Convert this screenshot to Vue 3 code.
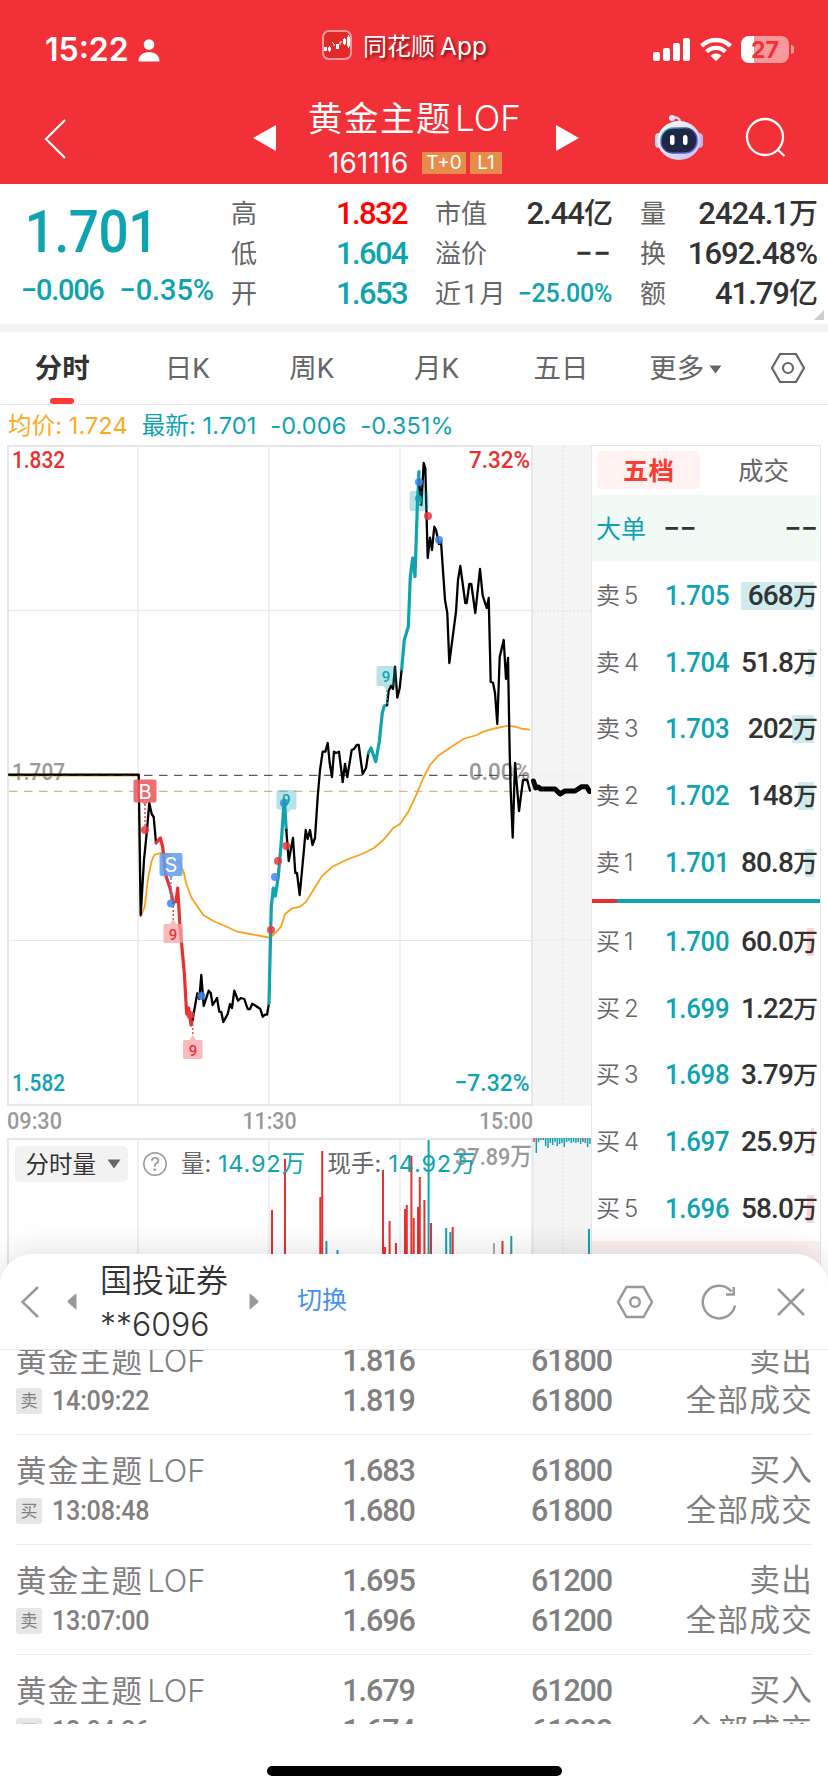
<script setup>
import { ref } from 'vue'

const tabs = ['分时', '日K', '周K', '月K', '五日']
const activeTab = ref('分时')

const quotes = [
  [
    { label: '高', value: '1.832', tone: 'up' },
    { label: '低', value: '1.604', tone: 'down' },
    { label: '开', value: '1.653', tone: 'down' }
  ],
  [
    { label: '市值', value: '2.44', unit: '亿' },
    { label: '溢价', value: '−−', tone: 'empty' },
    { label: '近1月', value: '−25.00%', tone: 'down small' }
  ],
  [
    { label: '量', value: '2424.1', unit: '万' },
    { label: '换', value: '1692.48%' },
    { label: '额', value: '41.79', unit: '亿' }
  ]
]

const sells = [
  { level: 5, price: '1.705', volume: '668', bar: 73 },
  { level: 4, price: '1.704', volume: '51.8', bar: 6 },
  { level: 3, price: '1.703', volume: '202', bar: 22 },
  { level: 2, price: '1.702', volume: '148', bar: 16 },
  { level: 1, price: '1.701', volume: '80.8', bar: 9 }
]

const buys = [
  { level: 1, price: '1.700', volume: '60.0', bar: 7 },
  { level: 2, price: '1.699', volume: '1.22', bar: 0 },
  { level: 3, price: '1.698', volume: '3.79', bar: 0 },
  { level: 4, price: '1.697', volume: '25.9', bar: 3 },
  { level: 5, price: '1.696', volume: '58.0', bar: 7 }
]

const orders = [
  { side: '卖', time: '14:09:22', price: '1.816', deal: '1.819', amount: '61800', action: '卖出' },
  { side: '买', time: '13:08:48', price: '1.683', deal: '1.680', amount: '61800', action: '买入' },
  { side: '卖', time: '13:07:00', price: '1.695', deal: '1.696', amount: '61200', action: '卖出' },
  { side: '买', time: '12:04:26', price: '1.679', deal: '1.674', amount: '61200', action: '买入' }
]

// 分时价格线, 按颜色分段
const segments = [
  { color: 'black', points: '9,774.7 138.7,774.7 140.7,915 144,860 146.7,833 149.3,803 151.7,814 153.7,817 156,843' },
  { color: 'red', points: '156,843 160.3,838 162.7,847 165.7,875 170,888 173.3,903' },
  { color: 'black', points: '173.3,903 176,901.7' },
  { color: 'red', points: '176,901.7 177.7,888 180,926.7 184.3,973 186.7,1014 188.7,1008 191,1025 192.7,1019' },
  { color: 'black', points: '192.7,1019 197.3,993.3 199.3,999 201.3,975 203.7,1006 206,999 208.7,990.7 210.7,993 212.7,1005 217,998 219.3,1011.7 221.3,1012 223.3,1022 227.7,1014 230,1004 232,1008 234.3,990.7 238,1000.7 241,998 244.3,999 247.7,1009 250,1009 252.3,1003.7 256,1006 260.3,1009 262.7,1016.7 265,1014.7 267,1014.7 269,1003.3' },
  { color: 'teal', points: '269,1003.3 270.7,930 271.3,906.7 273.3,888 275.3,896 278.3,876.7 281.7,836.7 283.7,806.7 284.3,800 286.3,830' },
  { color: 'black', points: '286.3,830 288.7,861 293,838 295.3,873 297,873 299.7,895 303,860 305.7,830 307.7,839 310,830 312.5,845 315,838 317.7,796.7 320,770 322.7,751.7 325.3,751.7 327.7,743 329.7,763 332,777 334,751.7 336,753 339,751.7 342.7,782 345,764 347.3,777 351.7,750 354,749 356.7,745 358.7,745 360.7,760 362.7,774 366,768 368.3,753' },
  { color: 'teal', points: '368.3,753 371,748 375.7,761.7 379.3,741.7 382.3,713 384.3,706 387,705' },
  { color: 'black', points: '387,705 388.7,690.7 391,685.7 393,689 395,666.7 397.3,697.7 399.7,688 401.7,669' },
  { color: 'teal', points: '401.7,669 404.3,640 408.3,626.7 410.3,576.7 412.7,558 415,576.7 417.3,506.7 419,471.7' },
  { color: 'black', points: '419,480 421.3,505 423.7,463 425.3,468 427.7,558 430,537.7 432,550 434.3,526.7 436,530 439,544 441,541.7 445,600 447.3,613 449.3,663 456,611.7 458,580 460.3,566 465.3,603 466.7,603 469.3,584 471.3,584 475.3,613 480,569 482.7,595.7 486.7,608 488.7,598 490.7,681.7 493,682.7 495,693 497.3,724 499.7,657 503.7,640 506,679 508,658 509.7,753 510.7,790 512.7,837.7 515,763 519,811 523,780 527.3,780 530,790.7' }
]

const average = '9,775.5 138.7,775.5 140.7,917 144.7,906.7 148.3,876.7 151.7,860.7 154.3,855 161.7,852.7 166.7,854 180,863 184,873 186,883 191.7,898 203.3,915 213.3,921 226.7,926.7 237.3,931.7 250,934 270,937.7 276.7,931.7 281,926.7 285,914 291.7,908.7 300,906.7 306,902 314,889 322,876 332,867 346,860 362,854 374,848 383.3,840 393.3,828 400,824 405,816.7 408.3,811.7 416.7,794 423.3,778 430,765 438.3,755.7 446.7,750 463.3,739 476.7,735 483.3,731.7 496.7,728 508.3,725.7 515,726.7 523.3,729 530,729.7'

const dots = [
  { x: 145, y: 830, c: 'red' }, { x: 171, y: 903.5, c: 'blue' },
  { x: 190.5, y: 1015, c: 'red' }, { x: 201.5, y: 996, c: 'blue' },
  { x: 271, y: 930, c: 'red' }, { x: 275, y: 877, c: 'blue' },
  { x: 278, y: 861, c: 'red' }, { x: 286.3, y: 846, c: 'red' },
  { x: 284, y: 803, c: 'blue' }, { x: 419, y: 482, c: 'blue' },
  { x: 428, y: 516, c: 'red' }, { x: 439, y: 540, c: 'blue' }
]

const volumes = [
  [272, 1210, 'red'], [285, 1159, 'red'], [320.3, 1197, 'red'], [322.2, 1151, 'red'],
  [326.4, 1241, 'teal'], [337.5, 1250, 'teal'], [383, 1170, 'red'], [385, 1247, 'red'],
  [389.6, 1221, 'red'], [396, 1243, 'red'], [405, 1209, 'red'], [406.8, 1205, 'red'],
  [411.4, 1156, 'red'], [413.7, 1218, 'red'], [418, 1207, 'red'], [419.8, 1177, 'red'],
  [424.4, 1200, 'red'], [428.6, 1140, 'teal'], [431, 1223, 'red'], [446.2, 1228, 'teal'],
  [450.4, 1232, 'teal'], [452.7, 1227, 'red'], [494, 1243, 'gray'], [502.5, 1241, 'red'],
  [511.3, 1236, 'teal'], [589, 1229, 'teal']
]

// 盘后成交, 从顶部向下画
const afterHours = [4, 15, 4, 2, 2, 8, 10, 5, 7, 4, 8, 6, 5, 9, 4, 3, 5, 4, 5, 4, 6, 4, 5, 9, 6]
</script>

<template>
  <div class="page">
    <header class="top">
      <div class="status">
        <div class="clock">
          <span>15:22</span>
          <svg width="22" height="24" viewBox="0 0 22 24"><circle cx="11" cy="6.5" r="5.3" /><path d="M.5 23c0-5.500 4.500-9 10.500-9s10.500 3.500 10.500 9q0 .5-1 .5h-19q-1 0-1-.5z" /></svg>
        </div>
        <div class="app-name">
          <svg width="30" height="30" viewBox="0 0 30 30">
            <rect x="1" y="1" width="28" height="28" rx="6" fill="#e22a2a" stroke="#f7999c" stroke-width="2" />
            <path d="M2 17h3v4H2zM14 14h3v5h-3zM21 9h3v5h-3z" fill="#fff" />
            <path d="M7.500 16v6M6.500 17.500h2v3h-2zM10 12l2 2v2M18 15v-3h2M22.500 8v7M26.500 5v13M25.500 7h2v9h-2z" stroke="#fff" fill="none" />
          </svg>
          <span>同花顺<b>App</b></span>
        </div>
        <div class="signals">
          <svg width="38" height="24" viewBox="0 0 38 24"><rect y="15" width="7" height="9" rx="2" /><rect x="10" y="11" width="7" height="13" rx="2" /><rect x="20" y="6" width="7" height="18" rx="2" /><rect x="30" y="1" width="7" height="23" rx="2" /></svg>
          <svg width="32" height="24" viewBox="0 0 32 24"><g fill="none" stroke="#fff" stroke-width="4.300"><path d="M1.500 9a20.500 20.500 0 0 1 29 0" /><path d="M6.700 14.700a13.200 13.200 0 0 1 18.600 0" /></g><path d="M10.500 18.700a8 8 0 0 1 11 0L16 24.200z" /></svg>
          <div class="battery"><span>27</span></div>
          <i class="nub"></i>
        </div>
      </div>
      <div class="title-bar">
        <svg class="back" width="24" height="42" viewBox="0 0 24 42"><path d="M22 2 3 21l19 19" fill="none" stroke="#fff" stroke-width="2.200" /></svg>
        <svg class="prev" width="23" height="26" viewBox="0 0 23 26"><path d="M23 0v26L0 13z" /></svg>
        <div class="title">
          <h1>黄金主题<span>LOF</span></h1>
          <div class="code"><span>161116</span><em>T+0</em><em class="l1">L1</em></div>
        </div>
        <svg class="next" width="23" height="26" viewBox="0 0 23 26"><path d="M0 0v26l23-13z" /></svg>
        <svg class="robot" width="50" height="46" viewBox="0 0 50 46">
          <defs>
            <linearGradient id="shell" x1="0" y1="0" x2="1" y2="1"><stop offset="0" stop-color="#fff" /><stop offset="1" stop-color="#bfc0ea" /></linearGradient>
            <linearGradient id="visor" x1="0" y1="0" x2="1" y2="1"><stop offset="0" stop-color="#58d7e8" /><stop offset=".4" stop-color="#39407e" /><stop offset="1" stop-color="#8a5cf0" /></linearGradient>
          </defs>
          <path d="M18 4q8-2 8 5" fill="none" stroke="#d9dcf5" stroke-width="2.500" />
          <circle cx="18" cy="4" r="3" fill="#e8eafc" />
          <rect x="1" y="19" width="8" height="15" rx="4" fill="#c9cdf2" /><rect x="41" y="19" width="8" height="15" rx="4" fill="#b7b9ea" />
          <ellipse cx="25" cy="26.500" rx="21.500" ry="19.500" fill="url(#shell)" />
          <rect x="7" y="14" width="36" height="25" rx="12" fill="#1d2748" stroke="url(#visor)" stroke-width="1.500" />
          <rect x="16" y="21" width="4.500" height="10" rx="2.200" fill="#fff" /><rect x="29" y="21" width="4.500" height="10" rx="2.200" fill="#fff" />
        </svg>
        <svg class="search" width="42" height="42" viewBox="0 0 42 42"><circle cx="20" cy="20" r="18" /><path d="m32.500 32.500 7 6.500" /></svg>
      </div>
    </header>

    <section class="quote">
      <div class="last">
        <div class="last-price">1.701</div>
        <div class="last-change"><span>−0.006</span><span>−0.35%</span></div>
      </div>
      <dl v-for="(group, i) in quotes" :key="i" :class="'group g' + i">
        <div v-for="q in group" :key="q.label">
          <dt>{{ q.label }}</dt>
          <dd :class="q.tone">{{ q.value }}<i v-if="q.unit">{{ q.unit }}</i></dd>
        </div>
      </dl>
      <i class="corner"></i>
    </section>

    <nav class="tabs">
      <button v-for="tab in tabs" :key="tab" :class="{ active: tab === activeTab }" @click="activeTab = tab">{{ tab }}</button>
      <button>更多<svg width="13" height="9" viewBox="0 0 13 9"><path d="M.5.500h12l-6 8z" fill="#666" /></svg></button>
      <svg class="hex" width="36" height="32" viewBox="0 0 36 32"><path d="M10 2h16l8 14-8 14H10L2 16z" /><circle cx="18" cy="16" r="5" /></svg>
    </nav>

    <div class="legend">
      <span class="avg">均价: 1.724</span><span>最新: 1.701</span><span>-0.006</span><span>-0.351%</span>
    </div>

    <main class="market">
      <svg class="chart" width="591" height="845" viewBox="0 445 591 845">
        <rect x="533" y="445" width="58" height="661" fill="#f4f4f4" />
        <rect x="533" y="1138" width="58" height="152" fill="#f4f4f4" />
        <g stroke="#f0f0f2" stroke-width="2">
          <path d="M138 446V1105M269 446V1105M400 446V1105M138 1139V1290M269 1139V1290M400 1139V1290" />
          <path d="M8 610.500H532M8 940.500H532" stroke="#e8e8ea" stroke-width="1" />
          <path d="M563 446V1105M563 1139V1290M533 611H591" stroke="#e6e6e6" stroke-dasharray="2 2" stroke-width="1.500" />
          <path d="M533 776H591M533 940H591" stroke="#ececec" stroke-width="1" />
        </g>
        <path d="M533 446H8V1105H532V446M8 1290V1139H591M532.500 1139V1290" fill="none" stroke="#e6e6e8" stroke-width="2" />

        <text class="num gray" x="12" y="780" textLength="53" lengthAdjust="spacingAndGlyphs">1.707</text>
        <text class="num gray" x="469" y="780" textLength="61" lengthAdjust="spacingAndGlyphs">0.00%</text>

        <polyline :points="average" fill="none" stroke="#fca11f" stroke-width="1.800" />
        <path d="M9 775.300H530" stroke="#333" stroke-dasharray="8.500 6.500" />
        <path d="M9 791.300H530" stroke="#c9a36c" stroke-dasharray="8.500 6.500" />
        <polyline v-for="(s, i) in segments" :key="i" :points="s.points" :class="['line', s.color]" />
        <polyline class="line after" points="533.500,781 535.700,788 538.300,787 540.700,789 555,789 560,794 565,791 575,791 581.700,786.700 586.700,786.700 589.500,791.500" />

        <g stroke-width="1.500" stroke-dasharray="2 2">
          <path d="M145 804V828M173.300 906V920M192.700 1024V1036" stroke="#e9494d" />
          <path d="M171 878V902" stroke="#4f8fe8" />
          <path d="M387 690V704" stroke="#0fa3b0" />
        </g>
        <circle v-for="(d, i) in dots" :key="'d' + i" :cx="d.x" :cy="d.y" r="4" :fill="d.c === 'red' ? '#e8383c' : '#3f87e8'" opacity=".85" />
        <g class="flag buy"><path d="M135.500 779.500h19a2 2 0 0 1 2 2v19a2 2 0 0 1-2 2h-7l-2.500 3-2.500-3h-7a2 2 0 0 1-2-2v-19a2 2 0 0 1 2-2z" /><text x="145" y="798.500">B</text></g>
        <g class="flag sell"><path d="M161.500 853h19a2 2 0 0 1 2 2v19a2 2 0 0 1-2 2h-7l-2.500 3-2.500-3h-7a2 2 0 0 1-2-2v-19a2 2 0 0 1 2-2z" /><text x="171" y="872">S</text></g>
        <g class="nine red"><path d="M165 924h5l3.300-5 3.300 5h5a1.500 1.500 0 0 1 1.500 1.500v16a1.500 1.500 0 0 1-1.500 1.500H165a1.500 1.500 0 0 1-1.500-1.500v-16A1.500 1.500 0 0 1 165 924z" /><text x="173" y="940">9</text></g>
        <g class="nine red"><path d="M184.500 1040h5l3.300-5 3.300 5h5a1.500 1.500 0 0 1 1.500 1.500v16a1.500 1.500 0 0 1-1.500 1.500h-16.600a1.500 1.500 0 0 1-1.500-1.500v-16a1.500 1.500 0 0 1 1.500-1.500z" /><text x="193" y="1056">9</text></g>
        <g class="nine teal"><path d="M278 790h17a1.500 1.500 0 0 1 1.500 1.500v16.500a1.500 1.500 0 0 1-1.500 1.500h-4.500l-3.500 5-3.500-5h-5.500a1.500 1.500 0 0 1-1.500-1.500v-16.500a1.500 1.500 0 0 1 1.500-1.500z" /><text x="286.300" y="805">9</text></g>
        <g class="nine teal"><path d="M378 666h17a1.500 1.500 0 0 1 1.500 1.500v17a1.500 1.500 0 0 1-1.500 1.500h-4.500l-3.500 5-3.500-5H378a1.500 1.500 0 0 1-1.500-1.500v-17a1.500 1.500 0 0 1 1.500-1.500z" /><text x="386" y="682">9</text></g>
        <g class="nine teal"><path d="M411 491h16a1.500 1.500 0 0 1 1.500 1.500v17a1.500 1.500 0 0 1-1.500 1.500h-16a1.500 1.500 0 0 1-1.500-1.500v-17a1.500 1.500 0 0 1 1.500-1.500z" /><text x="418.500" y="506">9</text></g>

        <text class="num up" x="12" y="468" textLength="53" lengthAdjust="spacingAndGlyphs">1.832</text>
        <text class="num up" x="469" y="468" textLength="61" lengthAdjust="spacingAndGlyphs">7.32%</text>
        <text class="num down" x="12" y="1091" textLength="53" lengthAdjust="spacingAndGlyphs">1.582</text>
        <text class="num down" x="454.500" y="1091" textLength="75" lengthAdjust="spacingAndGlyphs">−7.32%</text>
        <text class="num gray" x="7" y="1129" textLength="55" lengthAdjust="spacingAndGlyphs">09:30</text>
        <text class="num gray" x="242.500" y="1129" textLength="54" lengthAdjust="spacingAndGlyphs">11:30</text>
        <text class="num gray" x="479" y="1129" textLength="54" lengthAdjust="spacingAndGlyphs">15:00</text>

        <rect x="15" y="1146" width="113" height="36" rx="5" fill="#f2f2f2" />
        <text class="cjk dark" x="25.500" y="1173">分时量</text>
        <path d="M107.500 1159.500h13l-6.500 9z" fill="#666" />
        <circle cx="155" cy="1164" r="11.200" fill="none" stroke="#999" stroke-width="1.500" />
        <text class="cjk help" x="155" y="1171">?</text>
        <g v-for="(v, i) in volumes" :key="'v' + i" :class="['vol', v[2]]"><path :d="`M${v[0]} ${v[1]}V1290`" /></g>
        <text class="cjk" x="181" y="1172">量:</text>
        <text class="cjk legend-num" x="218" y="1172" textLength="87">14.92万</text>
        <text class="cjk" x="327.500" y="1172">现手:</text>
        <text class="num gray" x="455" y="1165" textLength="77" lengthAdjust="spacingAndGlyphs">37.89万</text>
        <text class="cjk legend-num" x="388.500" y="1172" textLength="87">14.92万</text>
        <path v-for="(h, i) in afterHours" :key="'a' + i" :d="`M${534 + i * 2.33} 1138v${h}`" :stroke="[0, 4, 21].includes(i) ? '#e8383c' : '#0fa3b0'" stroke-width="1.500" />
      </svg>

      <aside class="book">
        <div class="book-tabs"><span class="on">五档</span><span>成交</span></div>
        <div class="big"><span>大单</span><b>−−</b><b>−−</b></div>
        <div v-for="s in sells" :key="'s' + s.level" class="level sell">
          <span>卖{{ s.level }}</span><b>{{ s.price }}</b>
          <em><i :style="{ width: s.bar + 'px' }"></i><u>{{ s.volume }}<small>万</small></u></em>
        </div>
        <div class="ratio"><i></i></div>
        <div v-for="b in buys" :key="'b' + b.level" class="level buy">
          <span>买{{ b.level }}</span><b>{{ b.price }}</b>
          <em><i :style="{ width: b.bar + 'px' }"></i><u>{{ b.volume }}<small>万</small></u></em>
        </div>
        <div class="pink"></div>
      </aside>
    </main>

    <section class="sheet">
      <div class="sheet-head">
        <svg class="s-back" width="20" height="34" viewBox="0 0 20 34"><path d="M18 2 2.500 17 18 32" /></svg>
        <svg class="s-prev" width="10" height="17" viewBox="0 0 10 17"><path d="M9.500.500v16Q8 16 1 9.500q-1-1 0-2Q8 1 9.500.500z" /></svg>
        <div class="account"><div>国投证券</div><div class="acct-no">**6096</div></div>
        <svg class="s-next" width="10" height="17" viewBox="0 0 10 17"><path d="M.5.500v16Q2 16 9 9.500q1-1 0-2Q2 1 .5.500z" /></svg>
        <a>切换</a>
        <svg class="s-hex" width="38" height="34" viewBox="0 0 38 34"><path d="M10.500 2h17L36 17l-8.500 15h-17L2 17z" /><circle cx="19" cy="17" r="4.800" /></svg>
        <svg class="s-refresh" width="36" height="36" viewBox="0 0 36 36"><path d="M34 21.500A16.300 16.300 0 1 1 30.500 7.500" /><path d="M32.700 3v7.500H25" /></svg>
        <svg class="s-close" width="28" height="28" viewBox="0 0 28 28"><path d="m1 1 26 26M27 1 1 27" /></svg>
      </div>
      <div class="orders">
        <div class="order-list">
          <div v-for="o in orders" :key="o.time" class="order">
            <div class="o-name"><p>黄金主题<span>LOF</span></p><div><i>{{ o.side }}</i><time>{{ o.time }}</time></div></div>
            <div class="o-num"><p>{{ o.price }}</p><p>{{ o.deal }}</p></div>
            <div class="o-num"><p>{{ o.amount }}</p><p>{{ o.amount }}</p></div>
            <div class="o-state"><p>{{ o.action }}</p><p>全部成交</p></div>
          </div>
        </div>
      </div>
      <div class="home"></div>
    </section>
  </div>
</template>

<style>
body {
  margin: 0;
  background: #fff;
}
</style>

<style scoped>
* {
  box-sizing: border-box;
}

.page {
  width: 828px;
  height: 1792px;
  overflow: hidden;
  background: #fff;
  color: #333;
  font-family: Roboto, "Noto Sans CJK SC", sans-serif;
}

i, em {
  font-style: normal;
}

p, dl, dd, h1 {
  margin: 0;
}

/* 顶部 */
.top {
  height: 184px;
  background: #f23038;
  color: #fff;
}

.top svg {
  fill: #fff;
}

.status {
  display: flex;
  height: 98px;
}

.clock {
  width: 322px;
  padding: 31px 0 0 45px;
  display: flex;
  gap: 11px;
  font: 600 32px/38px Inter, sans-serif;
}

.clock svg {
  margin: 7px 0 0 -2px;
}

.app-name {
  width: 331px;
  padding-top: 30px;
  display: flex;
  gap: 11px;
  font-size: 24px;
  line-height: 32px;
  text-shadow: 2px 2px 3px rgba(80, 0, 0, .7);
}

.app-name b {
  margin-left: 5px;
  font: 400 24.500px/32px Inter, sans-serif;
}

.signals {
  display: flex;
  padding-top: 37px;
}

.signals svg + svg {
  margin-left: 9px;
}

.battery {
  width: 48px;
  height: 27px;
  margin: -1px 2px 0 9px;
  border-radius: 8px;
  background: linear-gradient(90deg, #fff 13px, #f8989c 13px);
  color: #f23038;
  font: 700 23px/28px Inter, sans-serif;
  text-align: center;
}

.nub {
  width: 3px;
  height: 9px;
  margin-top: 8px;
  border-radius: 0 4px 4px 0;
  background: #f8989c;
}

.title-bar {
  display: flex;
  height: 86px;
}

.back {
  margin: 20px 0 0 43px;
}

.prev {
  margin: 27px 0 0 186px;
}

.title {
  flex: none;
  width: 234px;
  margin: 0 33px 0 13px;
  padding-left: 19px;
}

h1 {
  height: 46px;
  font-size: 34.500px;
  font-weight: 400;
  line-height: 43px;
  letter-spacing: 1.500px;
  white-space: nowrap;
}

h1 span {
  margin-left: 3px;
  font: 300 35px/41px Inter, sans-serif;
  letter-spacing: 0;
}

.code {
  display: flex;
  align-items: center;
  height: 38px;
  padding-left: 20px;
  font: 400 28px/30px Inter, sans-serif;
}

.code span {
  width: 94px;
}

.code em {
  width: 44px;
  height: 22px;
  margin-right: 4px;
  background: #e58d4a;
  font-size: 19px;
  line-height: 22px;
  text-align: center;
}

.code .l1 {
  width: 32px;
}

.next {
  margin-top: 27px;
}

.robot {
  margin: 16px 0 0 75px;
}

.top .search {
  margin: 19px 0 0 41px;
  fill: none;
  stroke: #fff;
  stroke-width: 2.300;
}

/* 行情 */
.quote {
  position: relative;
  display: flex;
  height: 148px;
  border-bottom: 8px solid #f4f4f4;
}

.last {
  width: 231px;
  color: #0fa3b0;
  font-weight: 500;
}

.last-price {
  height: 84px;
  padding: 17px 0 0 25px;
  font-size: 60px;
  line-height: 62px;
  letter-spacing: -0.500px;
  transform: scaleX(.885);
  transform-origin: 22px 0;
}

.last-change {
  display: flex;
  gap: 16px;
  padding-left: 21px;
  font-size: 29px;
  line-height: 44px;
  letter-spacing: -1.300px;
  white-space: nowrap;
}

.last-change span + span {
  letter-spacing: -0.100px;
}

.group {
  padding-top: 10px;
}

.group > div {
  display: flex;
  justify-content: space-between;
  height: 40px;
  line-height: 40px;
  white-space: nowrap;
}

.g0 {
  width: 176px;
}

.g1 {
  width: 177px;
  margin-left: 28px;
}

.g2 {
  width: 177px;
  margin-left: 28px;
}

dt {
  font-size: 26px;
  color: #666;
}

.g1 > div:last-child dt {
  letter-spacing: 2px;
}

dd {
  font-size: 31px;
  font-weight: 500;
  letter-spacing: -1px;
}

.g0 dd {
  letter-spacing: -1.600px;
}

dd i {
  font-size: 29px;
}

.up {
  color: #f00;
}

.down {
  color: #0fa3b0;
}

.g1 .small {
  font-size: 25px;
  letter-spacing: -0.300px;
}

.g1 .empty {
  letter-spacing: 1px;
}

.corner {
  position: absolute;
  right: 4px;
  bottom: 4px;
  border-left: 10px solid transparent;
  border-bottom: 10px solid #ccc;
}

/* 周期切换 */
.tabs {
  display: flex;
  height: 73px;
  border-bottom: 1px solid #eaeaea;
}

.tabs button {
  position: relative;
  width: 124.700px;
  padding: 1px 0 0;
  border: 0;
  background: none;
  color: #666;
  font: 400 27.500px/71px Roboto, "Noto Sans CJK SC", sans-serif;
}

.tabs button svg {
  margin: 0 0 4px 5px;
}

.tabs .active {
  color: #333;
  font-weight: 700;
}

.tabs .active::after {
  content: "";
  position: absolute;
  left: 50px;
  bottom: 0;
  width: 24px;
  height: 6px;
  border-radius: 3px;
  background: #fd3b30;
}

.hex {
  margin: 20px 0 0 22px;
  fill: none;
  stroke: #666;
  stroke-width: 2.200;
}

.legend {
  display: flex;
  height: 40px;
  padding: 1px 0 0 8px;
  gap: 14px;
  color: #0fa3b0;
  font: 400 23.500px/40px Inter, "Noto Sans CJK SC", sans-serif;
  letter-spacing: 0.100px;
}

.avg {
  color: #fcaa1f;
}

/* 走势图 */
.market {
  display: flex;
  height: 845px;
}

.chart {
  flex: none;
}

.num {
  font-size: 24.500px;
  font-weight: 500;
}

.num.up {
  fill: #e93030;
}

.num.down {
  fill: #0fa3b0;
}

.num.gray {
  fill: #999;
}

.line {
  fill: none;
  stroke-width: 2.300;
  stroke-linejoin: round;
  stroke-linecap: round;
}

.line.black {
  stroke: #000;
}

.line.red {
  stroke: #e93030;
  stroke-width: 3.200;
}

.line.teal {
  stroke: #0fa3b0;
  stroke-width: 3.200;
}

.line.after {
  stroke: #000;
  stroke-width: 5;
}

.flag text {
  fill: #fff;
  font: 400 20px Inter, sans-serif;
  text-anchor: middle;
}

.flag.buy path {
  fill: #ee5a5e;
  opacity: .88;
}

.flag.sell path {
  fill: #5f9cec;
  opacity: .85;
}

.nine text {
  font-size: 15px;
  font-weight: 500;
  text-anchor: middle;
}

.nine.red path {
  fill: #f6a5a8;
  opacity: .75;
}

.nine.red text {
  fill: #e93030;
}

.nine.teal path {
  fill: #0fa3b0;
  opacity: .3;
}

.nine.teal text {
  fill: #0fa3b0;
}

.cjk {
  fill: #666;
  font: 400 23.500px Inter, "Noto Sans CJK SC", sans-serif;
}

.cjk.dark {
  fill: #333;
}

.cjk.help {
  font-size: 19px;
  fill: #999;
  text-anchor: middle;
}

.cjk.legend-num {
  fill: #0fa3b0;
}

.vol path {
  stroke-width: 2;
}

.vol.red path {
  stroke: #e93030;
}

.vol.teal path {
  stroke: #0fa3b0;
}

.vol.gray path {
  stroke: #aaa;
}

/* 五档 */
.book {
  width: 230px;
  border: 1px solid #e6e6e8;
  white-space: nowrap;
}

.book-tabs {
  display: flex;
  gap: 12px;
  height: 49px;
  padding: 5px;
  color: #666;
  font-size: 25.500px;
  line-height: 40px;
  text-align: center;
}

.book-tabs span {
  flex: none;
  width: 103px;
}

.book-tabs .on {
  height: 38px;
  border-radius: 5px;
  background: #fff2f1;
  color: #fd3b30;
  font-weight: 700;
}

.big {
  display: flex;
  height: 67px;
  padding: 0 3px 0 4px;
  background: #f2faf6;
  line-height: 69px;
}

.big span {
  width: 67px;
  color: #0fa3b0;
  font-size: 25px;
}

.big b {
  font-size: 30px;
  font-weight: 500;
  line-height: 68px;
  letter-spacing: -0.500px;
}

.big b + b {
  margin-left: auto;
}

.level {
  display: flex;
  height: 66.700px;
  padding-left: 4px;
  line-height: 67px;
}

.level span {
  width: 69px;
  color: #666;
  font: 350 24px/67px Inter, "Noto Sans CJK SC", sans-serif;
  letter-spacing: 4px;
}

.level b {
  width: 66px;
  color: #0fa3b0;
  font-size: 28px;
  font-weight: 500;
  letter-spacing: -0.300px;
  transform: scaleX(.92);
  transform-origin: 0 0;
}

.level em {
  display: grid;
  flex: 1;
  justify-items: end;
  align-items: center;
  padding-right: 3px;
}

.level em i, .level em u {
  grid-area: 1 / 1;
}

.level em i {
  height: 28px;
  margin-right: 3px;
  background: #ceebee;
}

.level.buy em i {
  background: #fbd3d5;
}

.level em u {
  text-decoration: none;
  font-size: 28px;
  font-weight: 500;
  letter-spacing: -0.900px;
}

small {
  font-size: 25px;
}

.ratio {
  height: 4px;
  margin: 3.500px 0 5px;
  background: #0fa3b0;
}

.ratio i {
  display: block;
  width: 25px;
  height: 4px;
  background: #e93030;
}

.pink {
  height: 49px;
  background: #fdf0f0;
}

/* 交易面板 */
.sheet {
  position: relative;
  height: 538px;
  margin-top: -36px;
  border-radius: 32px 32px 0 0;
  background: #fff;
  box-shadow: 0 -4px 30px rgba(0, 0, 0, .12);
}

.sheet-head {
  display: flex;
  align-items: center;
  height: 96px;
  padding-left: 20px;
  border-bottom: 1px solid #eaeaea;
}

.sheet-head svg {
  flex: none;
  fill: none;
  stroke: #999;
  stroke-width: 2.500;
}

.sheet-head .s-prev, .sheet-head .s-next {
  fill: #999;
  stroke: none;
}

.s-prev {
  margin-left: 27px;
}

.account {
  width: 149px;
  margin-left: 23px;
  padding-top: 3px;
  font-size: 32px;
  font-weight: 350;
  line-height: 44px;
}

.acct-no {
  font-family: Inter, sans-serif;
  font-weight: 300;
}

.sheet-head a {
  width: 318px;
  padding-left: 38px;
  color: #4691ee;
  font-size: 25px;
  line-height: 38px;
  padding-bottom: 2px;
}

.s-hex {
  margin-left: 39px;
}

.s-refresh {
  margin-left: 47px;
}

.s-close {
  margin-left: 40px;
}

.orders {
  display: flex;
  flex-direction: column;
  height: 374px;
  overflow: hidden;
}

.order-list {
  margin-top: -25px;
}

.order {
  display: grid;
  grid-template-columns: 266px 193px 193px 1fr;
  height: 110px;
  margin: 0 16px;
  padding-top: 16px;
  border-bottom: 1px solid #ebebeb;
  color: #808080;
  line-height: 40px;
}

.o-name p, .o-state p {
  font-size: 30.500px;
  font-weight: 400;
  letter-spacing: 1.300px;
}

.o-name span {
  margin-left: 4px;
  font: 300 31px/40px Inter, sans-serif;
  letter-spacing: 0;
}

.o-name div {
  display: flex;
  align-items: center;
  gap: 10px;
  height: 38px;
}

.o-name i {
  width: 26px;
  height: 26px;
  border-radius: 3px;
  background: #e6e6e6;
  font-size: 17px;
  line-height: 26px;
  text-align: center;
}

.o-name time {
  font-size: 27px;
  font-weight: 500;
  line-height: 36px;
  letter-spacing: -0.200px;
  transform: scaleX(.93);
  transform-origin: 0 0;
}

.o-num {
  text-align: center;
  font-size: 30.500px;
  font-weight: 500;
  letter-spacing: -1.100px;
}

.o-state {
  margin-right: -1px;
  text-align: right;
}

.home {
  width: 295px;
  height: 10px;
  margin: 42px auto 0;
  border-radius: 5px;
  background: #000;
}
</style>
